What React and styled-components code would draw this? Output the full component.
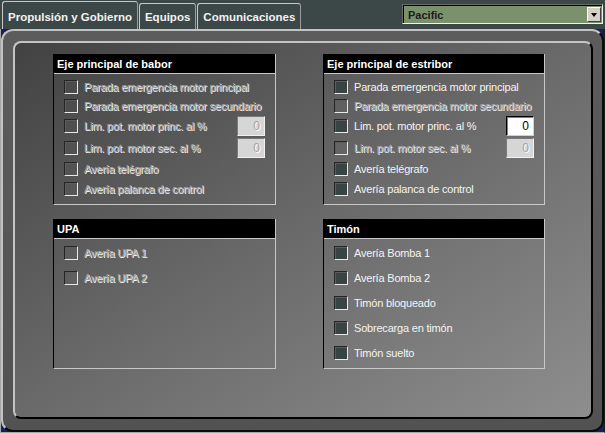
import React from "react";
import styled, { createGlobalStyle, css } from "styled-components";

const GlobalStyle = createGlobalStyle`
  html, body {
    margin: 0;
    padding: 0;
    background: #3c4848;
    overflow: hidden;
  }
  body {
    font-family: "Liberation Sans", Arial, sans-serif;
  }
`;

const Window = styled.div`
  width: 605px;
  height: 433px;
  display: flex;
  flex-direction: column;
  background: #3c4848;
`;

const TopBar = styled.div`
  height: 29px;
  flex-shrink: 0;
  display: flex;
  justify-content: space-between;
  padding-left: 2px;
`;

const Tabs = styled.div`
  display: flex;
  align-items: flex-end;
  gap: 1px;
`;

const Tab = styled.div`
  box-sizing: border-box;
  height: ${(p) => (p.$active ? 28 : 26)}px;
  padding: ${(p) => (p.$active ? 3 : 1)}px 5px 0;
  border: 1px solid #c8c8c8;
  border-bottom: none;
  border-right-color: #9c9c9c;
  border-radius: 3px 3px 0 0;
  display: flex;
  align-items: center;
  font-size: 11.5px;
  font-weight: bold;
  color: #f2f2f2;
  white-space: nowrap;
`;

const Select = styled.div`
  box-sizing: border-box;
  width: 201px;
  height: 20px;
  margin: 4px 2px 0 0;
  display: flex;
  align-items: center;
  justify-content: space-between;
  background: #7b916c;
  border: 1px solid;
  border-color: #6a6a6a #f0f0f0 #f0f0f0 #6a6a6a;
  box-shadow: inset 1px 1px 0 #000;
  padding: 1px 1px 0 5px;
  font-size: 11px;
  font-weight: bold;
  color: #1c1c1c;
`;

const ArrowButton = styled.span`
  box-sizing: border-box;
  width: 14px;
  height: 15px;
  display: flex;
  align-items: center;
  justify-content: center;
  background: #d4d0c8;
  border: 1px solid;
  border-color: #ffffff #404040 #404040 #ffffff;

  &::after {
    content: "";
    border-left: 3.5px solid transparent;
    border-right: 3.5px solid transparent;
    border-top: 4px solid #000;
  }
`;

const Pane = styled.div`
  flex: 1;
  display: flex;
  background: #1b1e5c;
  border-left: 1px solid #a8a8a8;
  border-right: 1px solid #1a1a1a;
  border-bottom: 1px solid #a8a8a8;
`;

const Frame = styled.div`
  flex: 1;
  display: flex;
  border: 2px solid;
  border-color: #c2c2c2 #0c0c0c #0c0c0c #c2c2c2;
  border-radius: 12px;
  background: linear-gradient(to bottom, #5c5c5c, #525252);
  padding: 10px 9px 11px 10px;
`;

const Panel = styled.div`
  flex: 1;
  border: 2px solid;
  border-color: #c4c4c4 #000 #000 #c4c4c4;
  border-radius: 8px;
  background: linear-gradient(to bottom right, #424242, #6a6a6a 50%, #8e8e8e);
  padding: 11px 46px 0 38px;
  display: grid;
  grid-template-columns: 223px 222px;
  grid-template-rows: 151px 150px;
  column-gap: 47px;
  row-gap: 14px;
`;

const Group = styled.div`
  display: flex;
  flex-direction: column;
  border-left: 1px solid #000;
  border-right: 1px solid #c8c8c8;
  border-bottom: 1px solid #c8c8c8;
  padding-bottom: 2px;
`;

const GroupTitle = styled.div`
  height: 19px;
  flex-shrink: 0;
  background: #000;
  border-bottom: 1px solid #c8c8c8;
  padding-left: 3px;
  margin-bottom: ${(p) => p.$gap}px;
  display: flex;
  align-items: center;
  color: #fff;
  font-weight: bold;
  font-size: 11px;
`;

const Row = styled.div`
  display: flex;
  align-items: center;
  height: ${(p) => p.$h}px;
  padding: 0 10px;
`;

const Check = styled.span`
  box-sizing: border-box;
  width: 14px;
  height: 14px;
  flex-shrink: 0;
  margin-right: 6px;
  border: 1px solid;
  border-color: #262626 #e8e8e8 #e8e8e8 #262626;
  box-shadow: inset 1px 1px 0 #5c5c5c;
  background: ${(p) => (p.$enabled ? "#384443" : "transparent")};
`;

const Label = styled.span`
  flex: 1;
  font-size: 11px;
  letter-spacing: -0.2px;
  white-space: nowrap;
  ${(p) =>
    p.$enabled
      ? css`
          color: #f4f4f4;
        `
      : css`
          color: #a8a8a8;
          text-shadow: 1px 1px 0 #f2f2f2;
        `}
`;

const NumBox = styled.span`
  box-sizing: border-box;
  width: 28px;
  height: 20px;
  display: flex;
  align-items: center;
  justify-content: flex-end;
  padding-right: 4px;
  font-size: 12px;
  border: 1px solid;
  ${(p) =>
    p.$enabled
      ? css`
          background: #fff;
          color: #000;
          border-color: #000 #d0d0d0 #d0d0d0 #000;
          box-shadow: inset 1px 1px 0 #808080;
        `
      : css`
          background: #d6d6d6;
          color: #a4a4a4;
          text-shadow: 1px 1px 0 #fff;
          border-color: #7a7a7a #f2f2f2 #f2f2f2 #7a7a7a;
        `}
`;

const babor = [
  { text: "Parada emergencia motor principal", h: 19 },
  { text: "Parada emergencia motor secundario", h: 19 },
  { text: "Lim. pot. motor princ. al %", h: 22, input: true },
  { text: "Lim. pot. motor sec. al %", h: 22, input: true },
  { text: "Avería telégrafo", h: 20 },
  { text: "Avería palanca de control", h: 20 },
];

const estribor = [
  { text: "Parada emergencia motor principal", h: 19, on: true },
  { text: "Parada emergencia motor secundario", h: 19 },
  { text: "Lim. pot. motor princ. al %", h: 22, input: true, on: true },
  { text: "Lim. pot. motor sec. al %", h: 22, input: true },
  { text: "Avería telégrafo", h: 20, on: true },
  { text: "Avería palanca de control", h: 20, on: true },
];

const upa = [
  { text: "Avería UPA 1", h: 25 },
  { text: "Avería UPA 2", h: 25 },
];

const timon = [
  { text: "Avería Bomba 1", h: 25, on: true },
  { text: "Avería Bomba 2", h: 25, on: true },
  { text: "Timón bloqueado", h: 25, on: true },
  { text: "Sobrecarga en timón", h: 25, on: true },
  { text: "Timón suelto", h: 25, on: true },
];

const GroupBox = ({ title, items, gap }) => (
  <Group>
    <GroupTitle $gap={gap}>{title}</GroupTitle>
    {items.map((item) => (
      <Row key={item.text} $h={item.h}>
        <Check $enabled={item.on} />
        <Label $enabled={item.on}>{item.text}</Label>
        {item.input && <NumBox $enabled={item.on}>0</NumBox>}
      </Row>
    ))}
  </Group>
);

const App = () => {
  return (
    <Window>
      <GlobalStyle />
      <TopBar>
        <Tabs>
          <Tab $active>Propulsión y Gobierno</Tab>
          <Tab>Equipos</Tab>
          <Tab>Comunicaciones</Tab>
        </Tabs>
        <Select>
          Pacific
          <ArrowButton />
        </Select>
      </TopBar>
      <Pane>
        <Frame>
          <Panel>
            <GroupBox title="Eje principal de babor" items={babor} gap={3} />
            <GroupBox title="Eje principal de estribor" items={estribor} gap={3} />
            <GroupBox title="UPA" items={upa} gap={1} />
            <GroupBox title="Timón" items={timon} gap={1} />
          </Panel>
        </Frame>
      </Pane>
    </Window>
  );
};

export default App;
